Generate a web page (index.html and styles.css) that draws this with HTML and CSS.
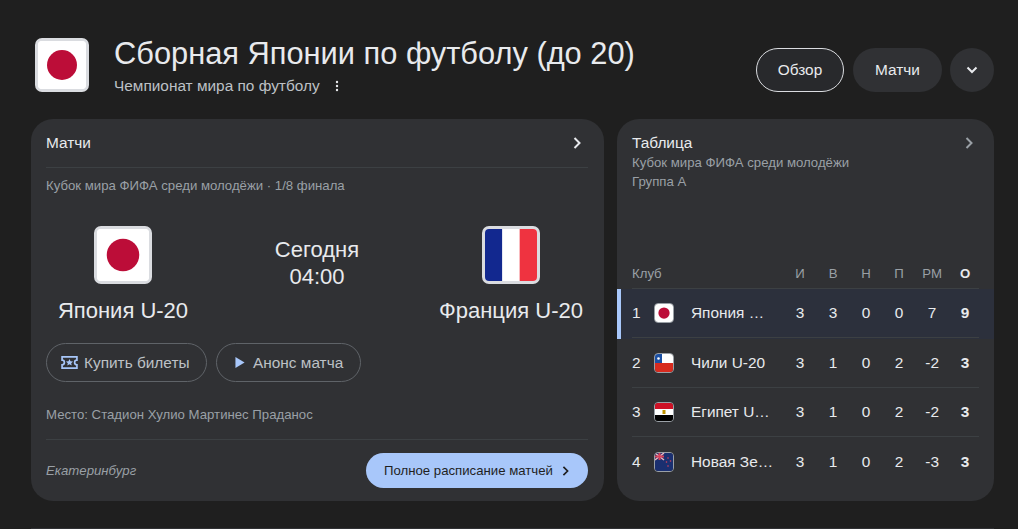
FILE: index.html
```html
<!DOCTYPE html>
<html lang="ru">
<head>
<meta charset="utf-8">
<title>Сборная Японии по футболу (до 20)</title>
<link rel="stylesheet" href="styles.css">
</head>
<body>
<div class="page">
  <header class="head">
    <div class="flag flag-lg">
      <svg viewBox="0 0 48 48" class="flag-svg"><rect width="48" height="48" fill="#fff"/><circle cx="24" cy="24" r="15" fill="#bc0d38"/></svg>
    </div>
    <div class="head-text">
      <h1 class="title">Сборная Японии по футболу (до 20)</h1>
      <div class="subtitle"><span>Чемпионат мира по футболу</span>
        <svg class="dots" viewBox="0 0 4 12" width="4" height="12"><circle cx="2" cy="2" r="1.2"/><circle cx="2" cy="6" r="1.2"/><circle cx="2" cy="10" r="1.2"/></svg>
      </div>
    </div>
    <nav class="tabs">
      <a class="tab tab-active">Обзор</a>
      <a class="tab tab-matches">Матчи</a>
      <a class="tab tab-round">
        <svg viewBox="0 0 12 8" width="12" height="8"><path d="M1.5 1.5 6 6l4.5-4.5" fill="none" stroke="#e8eaed" stroke-width="2"/></svg>
      </a>
    </nav>
  </header>
  <main class="cards">
    <section class="card match">
      <div class="match-top">
        <span>Матчи</span>
        <svg viewBox="0 0 8 12" width="8" height="12"><path d="M1.5 1 6.5 6l-5 5" fill="none" stroke="#e8eaed" stroke-width="2"/></svg>
      </div>
      <div class="comp">Кубок мира ФИФА среди молодёжи · 1/8 финала</div>
      <div class="teams">
        <div class="team">
          <div class="flag flag-md">
            <svg viewBox="0 0 48 48" class="flag-svg"><rect width="48" height="48" fill="#fff"/><circle cx="24" cy="24" r="15" fill="#bc0d38"/></svg>
          </div>
          <div class="team-name">Япония U-20</div>
        </div>
        <div class="when"><div>Сегодня</div><div>04:00</div></div>
        <div class="team">
          <div class="flag flag-md">
            <svg viewBox="0 0 3 3" preserveAspectRatio="none" class="flag-svg"><rect width="1" height="3" fill="#12288f"/><rect x="1" width="1" height="3" fill="#fff"/><rect x="2" width="1" height="3" fill="#ef3340"/></svg>
          </div>
          <div class="team-name">Франция U-20</div>
        </div>
      </div>
      <div class="actions">
        <a class="pill pill-ticket">
          <svg viewBox="0 0 18 14" width="17" height="13"><path d="M1 1h16v3.500a2.500 2.500 0 0 0 0 5V13H1V9.500a2.500 2.500 0 0 0 0-5z" fill="none" stroke="#a8c7fa" stroke-width="1.800"/><path d="m9 3.200 1.100 2.500 2.700.2-2 1.800.6 2.600L9 9l-2.400 1.300.6-2.600-2-1.800 2.700-.2z" fill="#a8c7fa"/></svg>
          <span>Купить билеты</span>
        </a>
        <a class="pill pill-play">
          <svg viewBox="0 0 10 12" width="10" height="11"><path d="M0 0v12l10-6z" fill="#a8c7fa"/></svg>
          <span>Анонс матча</span>
        </a>
      </div>
      <div class="venue">Место: Стадион Хулио Мартинес Праданос</div>
      <div class="match-foot">
        <em class="city">Екатеринбург</em>
        <a class="cta"><span>Полное расписание матчей</span>
          <svg viewBox="0 0 8 12" width="7" height="10"><path d="M1.500 1 6.500 6l-5 5" fill="none" stroke="#1f1f1f" stroke-width="2"/></svg>
        </a>
      </div>
    </section>
    <section class="card table">
      <div class="table-top">
        <div>
          <div class="table-title">Таблица</div>
          <div class="table-sub">Кубок мира ФИФА среди молодёжи</div>
          <div class="table-sub">Группа A</div>
        </div>
        <svg viewBox="0 0 8 12" width="8" height="12"><path d="M1.500 1 6.500 6l-5 5" fill="none" stroke="#9aa0a6" stroke-width="2"/></svg>
      </div>
      <div class="grid grid-head">
        <span class="club">Клуб</span><span>И</span><span>В</span><span>Н</span><span>П</span><span>РМ</span><b>О</b>
      </div>
      <div class="row row-hl">
        <div class="grid">
          <span class="pos">1</span>
          <span class="mini"><svg viewBox="0 0 48 48" class="flag-svg"><rect width="48" height="48" fill="#fff"/><circle cx="24" cy="24" r="15" fill="#bc0d38"/></svg></span>
          <span class="name">Япония …</span><span>3</span><span>3</span><span>0</span><span>0</span><span>7</span><b>9</b>
        </div>
      </div>
      <div class="row">
        <div class="grid">
          <span class="pos">2</span>
          <span class="mini"><svg viewBox="0 0 18 18" class="flag-svg"><rect width="18" height="9" fill="#fff"/><rect y="9" width="18" height="9" fill="#d72b1f"/><rect width="7" height="9" fill="#1a4fa3"/><circle cx="3.500" cy="4.500" r="1.300" fill="#fff"/></svg></span>
          <span class="name">Чили U-20</span><span>3</span><span>1</span><span>0</span><span>2</span><span>-2</span><b>3</b>
        </div>
      </div>
      <div class="row">
        <div class="grid">
          <span class="pos">3</span>
          <span class="mini"><svg viewBox="0 0 18 18" class="flag-svg"><rect width="18" height="6" fill="#ce1126"/><rect y="6" width="18" height="6" fill="#fff"/><rect y="12" width="18" height="6" fill="#000"/><rect x="7.500" y="7" width="3" height="4" fill="#c09300"/></svg></span>
          <span class="name">Египет U…</span><span>3</span><span>1</span><span>0</span><span>2</span><span>-2</span><b>3</b>
        </div>
      </div>
      <div class="row">
        <div class="grid">
          <span class="pos">4</span>
          <span class="mini"><svg viewBox="0 0 18 18" class="flag-svg"><rect width="18" height="18" fill="#1a2f70"/><path d="M0 0l9 7M9 0 0 7" stroke="#e8b4bc" stroke-width="1.500"/><path d="M4.500 0v7M0 3.500h9" stroke="#d8435a" stroke-width="2"/><circle cx="13" cy="5" r=".8" fill="#d8435a"/><circle cx="15.500" cy="8" r=".8" fill="#d8435a"/><circle cx="11.500" cy="9" r=".8" fill="#d8435a"/><circle cx="13" cy="13" r=".8" fill="#d8435a"/></svg></span>
          <span class="name">Новая Зе…</span><span>3</span><span>1</span><span>0</span><span>2</span><span>-3</span><b>3</b>
        </div>
      </div>
    </section>
  </main>
  <div class="next-card"></div>
</div>
</body>
</html>
```
FILE: styles.css
```css
* { box-sizing: border-box; }
html, body { margin: 0; height: 100%; }
body {
  background: #1f1f1f;
  color: #e8eaed;
  font-family: "Liberation Sans", Arial, sans-serif;
  overflow: hidden;
}
.page { padding: 36px 24px 0 31px; }

.head { display: flex; align-items: flex-start; height: 83px; }
.flag { background: #fff; overflow: hidden; flex: none; border-style: solid; border-color: #dadce0; }
.flag-svg { display: block; width: 100%; height: 100%; }
.flag-lg { width: 54px; height: 54px; border-width: 3px; border-radius: 7px; margin: 2px 0 0 4px; }
.head-text { margin-left: 25px; flex: 1; }
.title { margin: 0; font-size: 30.800px; line-height: 36px; font-weight: 400; color: #e8eaed; }
.subtitle { display: flex; align-items: center; gap: 15px; margin-top: 5px; font-size: 15.400px; line-height: 18px; color: #bdc1c6; }
.dots { fill: #e8eaed; }
.tabs { display: flex; gap: 9px; margin-top: 12px; }
.tab {
  display: flex; align-items: center; justify-content: center;
  height: 44px; border-radius: 22px;
  background: #303134; color: #e8eaed; font-size: 15.400px;
}
.tab-active { border: 1px solid #dadce0; width: 88px; background: #28292c; }
.tab-matches { width: 89px; }
.tab-round { width: 44px; margin-left: -1px; }

.cards { display: flex; gap: 13px; }
.card { background: #303134; border-radius: 22px; height: 382px; }
.match { width: 573px; padding: 0 16px 0 15px; display: flex; flex-direction: column; }
.table { width: 377px; }
.next-card { margin-top: 27px; height: 1px; background: #303134; }

.match-top {
  display: flex; justify-content: space-between; align-items: center;
  height: 49px; border-bottom: 1px solid #3c4043;
  font-size: 15.400px; color: #e8eaed; padding: 0 7px 0 0;
}
.comp { margin-top: 10px; font-size: 13.200px; line-height: 16px; color: #9aa0a6; }
.teams { display: flex; justify-content: space-between; margin-top: 32px; height: 100px; }
.team { width: 154px; display: flex; flex-direction: column; align-items: center; }
.flag-md { width: 58px; height: 58px; border-width: 3px; border-radius: 7px; }
.team-name { margin-top: 14px; font-size: 22px; line-height: 26px; white-space: nowrap; color: #e8eaed; }
.when { font-size: 22px; line-height: 27px; text-align: center; margin-top: 10px; color: #e8eaed; }
.actions { display: flex; gap: 9px; margin-top: 17px; }
.pill {
  display: flex; align-items: center;
  height: 39px; border-radius: 20px;
  border: 1px solid #5f6368; font-size: 15.400px; color: #bdc1c6;
}
.pill-ticket { gap: 6px; width: 161px; padding-left: 14px; }
.pill-play { gap: 8px; width: 145px; padding-left: 18px; }
.venue { margin-top: 25px; font-size: 13.200px; line-height: 16px; color: #9aa0a6; }
.match-foot {
  display: flex; justify-content: space-between; align-items: center;
  margin-top: 16px; height: 62px; border-top: 1px solid #3c4043;
}
.city { font-size: 13.200px; color: #9aa0a6; }
.cta {
  display: flex; align-items: center; gap: 9px;
  height: 35px; width: 222px; padding-left: 18px; border-radius: 18px;
  background: #a8c7fa; color: #1f1f1f; font-size: 13.200px;
}

.table-top { display: flex; justify-content: space-between; height: 142px; padding: 15px 21px 0 15px; color: #e8eaed; }
.table-top svg { margin-top: 3px; }
.table-title { font-size: 15.400px; line-height: 18px; margin-bottom: 2px; }
.table-sub { font-size: 13.200px; line-height: 17px; margin-top: 2px; color: #9aa0a6; }
.grid {
  display: grid;
  grid-template-columns: 22px 37px 92.600px repeat(6, 33px);
  align-items: center; margin: 0 15px; font-size: 15.400px; color: #e8eaed;
  height: calc(100% - .5px);
}
.grid > span, .grid > b { text-align: center; }
.grid-head { height: 28px; padding-bottom: 2px; border-bottom: 1px solid #3c4043; font-size: 13.200px; color: #9aa0a6; grid-template-columns: 151.600px repeat(6, 33px); }
.grid-head b { color: #e8eaed; }
.grid > .club, .grid > .name, .grid > .pos { text-align: left; }
.grid > .name { white-space: nowrap; overflow: hidden; }
.row { height: 49.500px; }
.row .grid { border-bottom: 1px solid #3c4043; }
.row:last-child .grid { border-bottom: 0; }
.row-hl { background: #2c303c; box-shadow: inset 4px 0 0 #a8c7fa; }
.mini { display: block; width: 20px; height: 20px; border: 1px solid #9aa0a6; border-radius: 4px; overflow: hidden; }
```
